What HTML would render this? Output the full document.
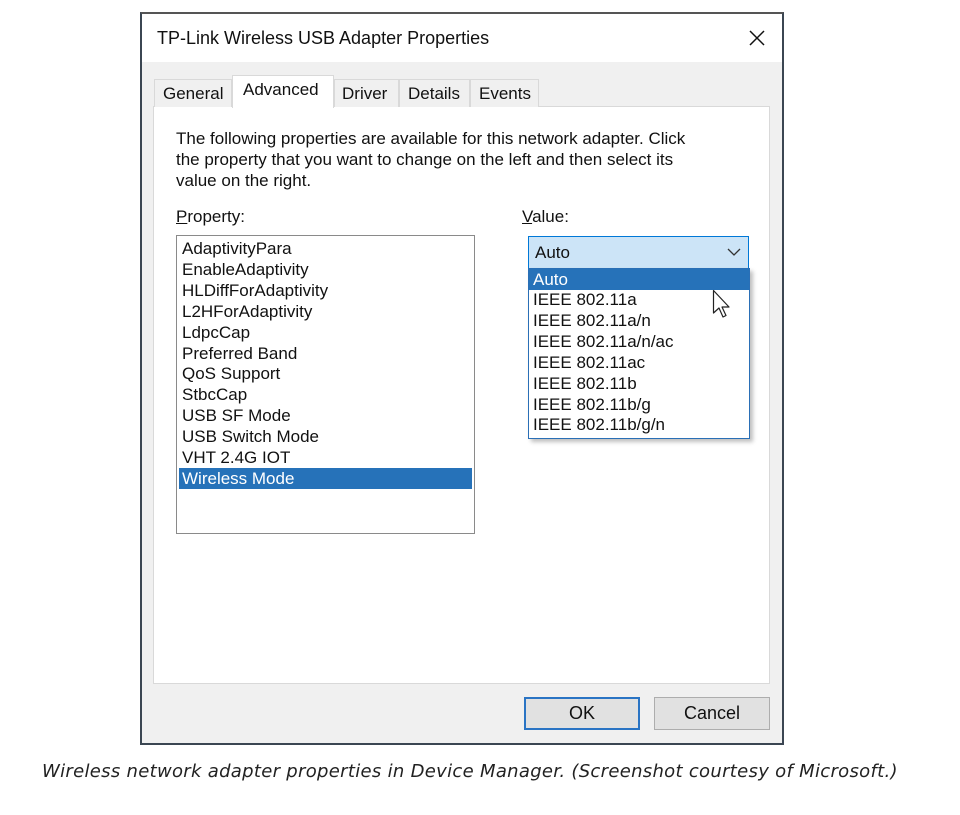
<!DOCTYPE html>
<html><head><style>
*{margin:0;padding:0;box-sizing:border-box}
body{width:960px;height:815px;background:#fff;position:relative;font-family:"Liberation Sans",sans-serif;color:#111;overflow:hidden}
.a{position:absolute}
.t{font-size:17px;line-height:21px;white-space:nowrap}
</style></head><body>
<div class="a" style="left:140px;top:12px;width:644px;height:733px;border:2px solid #3b4652;border-top-color:#555;background:#f0f0f0"></div>
<div class="a" style="left:142px;top:14px;width:640px;height:48px;background:#fff"></div>
<div class="a t" style="left:157px;top:28px;font-size:18px">TP-Link Wireless USB Adapter Properties</div>
<svg class="a" style="left:748px;top:29px" width="18" height="18"><path d="M2 2L16 16M16 2L2 16" stroke="#111" stroke-width="1.5"/></svg>
<div class="a" style="left:153px;top:106px;width:617px;height:578px;background:#fff;border:1px solid #d9d9d9"></div>
<div class="a t" style="left:154px;top:79px;width:78px;height:28px;border:1px solid #d9d9d9;border-bottom:none;background:#f0f0f0;padding:3px 0 0 8px">General</div>
<div class="a t" style="left:232px;top:75px;width:102px;height:33px;border:1px solid #d9d9d9;border-bottom:none;background:#fff;padding:3px 0 0 10px">Advanced</div>
<div class="a t" style="left:334px;top:79px;width:65px;height:28px;border:1px solid #d9d9d9;border-bottom:none;background:#f0f0f0;padding:3px 0 0 7px">Driver</div>
<div class="a t" style="left:399px;top:79px;width:71px;height:28px;border:1px solid #d9d9d9;border-bottom:none;background:#f0f0f0;padding:3px 0 0 8px">Details</div>
<div class="a t" style="left:470px;top:79px;width:69px;height:28px;border:1px solid #d9d9d9;border-bottom:none;background:#f0f0f0;padding:3px 0 0 8px">Events</div>
<div class="a t" style="left:176px;top:128px">The following properties are available for this network adapter. Click<br>the property that you want to change on the left and then select its<br>value on the right.</div>
<div class="a t" style="left:176px;top:206px"><u>P</u>roperty:</div>
<div class="a t" style="left:522px;top:206px"><u>V</u>alue:</div>
<div class="a" style="left:176px;top:235px;width:299px;height:299px;border:1px solid #8a8a8a;background:#fff"></div>
<div class="a t" style="left:182px;top:239px;line-height:20.9px">AdaptivityPara<br>EnableAdaptivity<br>HLDiffForAdaptivity<br>L2HForAdaptivity<br>LdpcCap<br>Preferred Band<br>QoS Support<br>StbcCap<br>USB SF Mode<br>USB Switch Mode<br>VHT 2.4G IOT</div>
<div class="a t" style="left:179px;top:468px;width:293px;height:21px;background:#2672b9;color:#fff;padding-left:3px">Wireless Mode</div>
<div class="a t" style="left:528px;top:236px;width:221px;height:33px;border:1px solid #0078d7;background:#cce4f7;padding:5px 0 0 6px">Auto</div>
<svg class="a" style="left:727px;top:247px" width="14" height="10"><path d="M1 2L7 8L13 2" fill="none" stroke="#333" stroke-width="1.3"/></svg>
<div class="a" style="left:528px;top:268px;width:222px;height:171px;border:1px solid #2a6fb6;background:#fff;box-shadow:3px 3px 4px rgba(0,0,0,.25)"></div>
<div class="a t" style="left:529px;top:269px;width:220px;height:21px;background:#2672b9;color:#fff;padding-left:4px">Auto</div>
<div class="a t" style="left:533px;top:290px;line-height:20.9px">IEEE 802.11a<br>IEEE 802.11a/n<br>IEEE 802.11a/n/ac<br>IEEE 802.11ac<br>IEEE 802.11b<br>IEEE 802.11b/g<br>IEEE 802.11b/g/n</div>
<svg class="a" style="left:712px;top:289px" width="22" height="32"><path d="M1.5 1.5V24L7 19L11 28L14 26.5L10 18H17Z" fill="#fff" stroke="#222" stroke-width="1.2" stroke-linejoin="round"/></svg>
<div class="a t" style="left:524px;top:697px;width:116px;height:33px;border:2px solid #2a74c4;background:#e1e1e1;text-align:center;padding-top:4px;font-size:18px">OK</div>
<div class="a t" style="left:654px;top:697px;width:116px;height:33px;border:1px solid #adadad;background:#e1e1e1;text-align:center;padding-top:5px;font-size:18px">Cancel</div>
<div class="a" style="left:42px;top:761px;font-size:18px;font-style:italic;color:#222;white-space:nowrap;font-family:'DejaVu Sans',sans-serif;letter-spacing:0.3px">Wireless network adapter properties in Device Manager. (Screenshot courtesy of Microsoft.)</div>
</body></html>
